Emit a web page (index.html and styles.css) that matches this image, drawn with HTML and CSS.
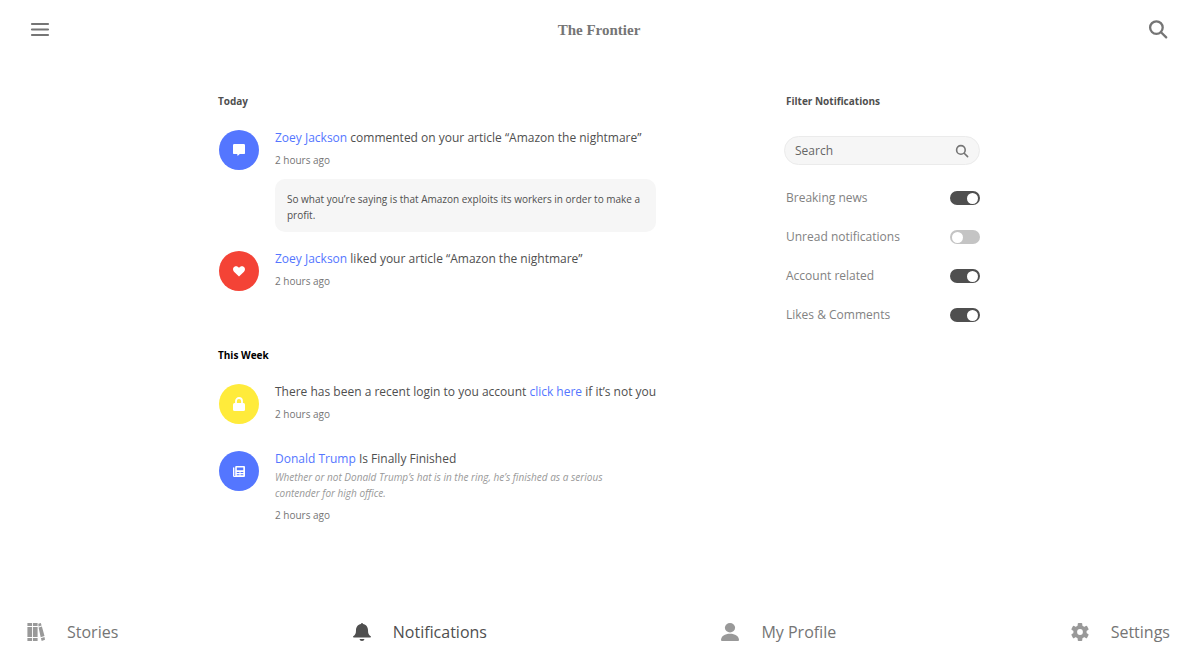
FILE: index.html
```html
<!DOCTYPE html>
<html lang="en">
<head>
<meta charset="utf-8">
<meta name="viewport" content="width=device-width, initial-scale=1">
<title>The Frontier</title>
<link rel="stylesheet" href="styles.css">
</head>
<body>
<header class="topbar">
  <button class="icon-button" type="button" aria-label="Menu">
    <svg width="20" height="20" viewBox="0 0 20 20" fill="none" stroke="#757575" stroke-width="2.2" stroke-linecap="round"><path d="M2 4h16M2 9.500h16M2 15h16"/></svg>
  </button>
  <h1 class="brand">The Frontier</h1>
  <button class="icon-button" type="button" aria-label="Search">
    <svg width="20" height="20" viewBox="0 0 20 20" fill="none" stroke="#757575" stroke-width="2.3" stroke-linecap="round"><circle cx="8.400" cy="7.600" r="6.300"/><path d="M13 12.200l5.200 5.200"/></svg>
  </button>
</header>

<main class="content">
  <div class="feed">
    <section>
      <h2 class="heading">Today</h2>
      <article class="notice">
        <span class="badge badge-blue"><svg width="12" height="12" viewBox="0 0 12 12" fill="#fff"><path d="M1.200 0h9.600Q12 0 12 1.200v7.700q0 1.200-1.200 1.200H6.800L4.600 12 4.200 10.100h-3Q0 10.100 0 8.900V1.200Q0 0 1.200 0z"/></svg></span>
        <div class="notice-body">
          <p class="message"><a href="#zoey">Zoey Jackson</a> commented on your article “Amazon the nightmare”</p>
          <p class="time">2 hours ago</p>
          <blockquote class="quote">So what you’re saying is that Amazon exploits its workers in order to make a profit.</blockquote>
        </div>
      </article>
      <article class="notice">
        <span class="badge badge-red"><svg width="12" height="12" viewBox="0 0 12 12" fill="#fff"><path d="M6 11.500L1 6.700C-.5 5-.2 2.700 1.400 1.700 2.900.8 4.900 1.200 6 2.800 7.100 1.200 9.100.8 10.600 1.700c1.600 1 1.900 3.300.4 5z"/></svg></span>
        <div class="notice-body">
          <p class="message"><a href="#zoey">Zoey Jackson</a> liked your article “Amazon the nightmare”</p>
          <p class="time">2 hours ago</p>
        </div>
      </article>
    </section>
    <section>
      <h2 class="heading heading-dark">This Week</h2>
      <article class="notice notice-spaced">
        <span class="badge badge-yellow"><svg width="12" height="14" viewBox="0 0 12 14"><rect y="6" width="12" height="8" rx="1.500" fill="#fff"/><path d="M3 6.500V4a3 3 0 0 1 6 0v2.500" fill="none" stroke="#fff" stroke-width="1.800"/></svg></span>
        <div class="notice-body">
          <p class="message">There has been a recent login to you account <a href="#login">click here</a> if it’s not you</p>
          <p class="time">2 hours ago</p>
        </div>
      </article>
      <article class="notice">
        <span class="badge badge-blue"><svg width="12" height="11" viewBox="0 0 12 11"><path fill="#fff" fill-rule="evenodd" d="M3.200 0H11q1 0 1 1v9q0 1-1 1H1.200Q0 11 0 9.800V2q0-.7.700-.7t.7.700v7.500q0 .5.400.5t.4-.5V1q0-1 1-1zM3.800 1.500v2.800h6.500V1.500zM3.800 5.900v1h2.700v-1zM7.500 5.900v1h2.800v-1zM3.800 8.200v1h2.700v-1zM7.500 8.200v1h2.800v-1z"/></svg></span>
        <div class="notice-body">
          <p class="message"><a href="#trump">Donald Trump</a> Is Finally Finished</p>
          <p class="excerpt">Whether or not Donald Trump’s hat is in the ring, he’s finished as a serious contender for high office.</p>
          <p class="time">2 hours ago</p>
        </div>
      </article>
    </section>
  </div>

  <aside class="filters">
    <h2 class="heading">Filter Notifications</h2>
    <div class="search">
      <input class="search-input" type="text" placeholder="Search" aria-label="Search notifications">
      <svg width="14" height="14" viewBox="0 0 14 14" fill="none" stroke="#757575" stroke-width="1.600" stroke-linecap="round"><circle cx="5.900" cy="5.900" r="4.300"/><path d="M9.200 9.200l3.400 3.400"/></svg>
    </div>
    <div class="toggles">
      <label class="toggle">Breaking news<input class="switch" type="checkbox" checked></label>
      <label class="toggle">Unread notifications<input class="switch" type="checkbox"></label>
      <label class="toggle">Account related<input class="switch" type="checkbox" checked></label>
      <label class="toggle">Likes &amp; Comments<input class="switch" type="checkbox" checked></label>
    </div>
  </aside>
</main>

<nav class="tabs">
  <a class="tab" href="#stories">
    <svg width="18" height="18" viewBox="0 0 18 18" fill="#999"><path d="M.4 0h4.700v3H.4zM.4 3.900h4.700v10.200H.4zM.4 15h4.700v3H.4zM6 0h4.600v3H6zM6 3.900h4.600v10.200H6zM6 15h4.600v3H6zM11.300.8l2.500-.8.8 2.500-3.100 1zM11.600 4.400l3.300-.9 2.600 9.500-3.800 1.200zM13.900 15.200l3.600-1.100.5 2.700L14.700 18z"/></svg>
    Stories</a>
  <a class="tab tab-active" href="#notifications" aria-current="page">
    <svg width="18" height="18" viewBox="0 0 18 18" fill="#4f4f4f"><path d="M8 1a1 1 0 0 1 2 0C13 1.500 15 4 15 7.200c0 3.600.8 4.700 2.700 6 .6.600.2 1.300-.5 1.300H.8c-.7 0-1.100-.7-.5-1.300C2.200 11.900 3 10.800 3 7.200 3 4 5 1.500 8 1zM6.500 15.900h5A2.500 2.500 0 0 1 9 18a2.500 2.500 0 0 1-2.500-2.100z"/></svg>
    Notifications</a>
  <a class="tab" href="#profile">
    <svg width="18" height="18" viewBox="0 0 18 18" fill="#999"><ellipse cx="9" cy="4.700" rx="5.100" ry="4.700"/><path d="M0 17c0-4 4-6.300 9-6.300S18 13 18 17q0 1-1 1H1q-1 0-1-1z"/></svg>
    My Profile</a>
  <a class="tab" href="#settings">
    <svg width="18" height="18" viewBox="0 0 18 18"><g fill="#999"><circle cx="9" cy="9" r="6.700"/><rect x="6.700" y="0" width="4.600" height="18" rx="1"/><rect x="6.700" y="0" width="4.600" height="18" rx="1" transform="rotate(60 9 9)"/><rect x="6.700" y="0" width="4.600" height="18" rx="1" transform="rotate(120 9 9)"/></g><circle cx="9" cy="9" r="2.900" fill="#fff"/></svg>
    Settings</a>
</nav>
</body>
</html>
```
FILE: styles.css
```css
* {
  box-sizing: border-box;
}

body {
  margin: 0;
  min-height: 100vh;
  display: flex;
  flex-direction: column;
  background: #fff;
  color: #4f4f4f;
  font-family: "Open Sans", "Noto Sans", sans-serif;
  font-size: 12px;
  line-height: 16px;
}

h1, h2, p, blockquote {
  margin: 0;
}

a {
  color: #5476ff;
  text-decoration: none;
}

svg {
  display: block;
  flex: none;
}

.topbar {
  display: flex;
  align-items: center;
  justify-content: space-between;
  padding: 20px 30px;
}

.icon-button {
  padding: 0;
  border: 0;
  background: none;
  cursor: pointer;
}

.brand {
  color: #757575;
  font-family: "Liberation Serif", serif;
  font-size: 15px;
  font-weight: 700;
  line-height: 20px;
}

.content {
  flex: 1;
  display: flex;
  justify-content: space-between;
  width: 100%;
  max-width: 762px;
  margin: 0 auto;
  padding-top: 33px;
}

.feed {
  display: flex;
  flex-direction: column;
  gap: 37px;
  width: 442px;
}

.heading {
  margin-bottom: 21px;
  font-size: 10px;
  font-weight: 700;
  line-height: 16px;
}

.heading-dark {
  color: #000;
}

.notice {
  display: flex;
  gap: 16px;
  margin-bottom: 19px;
  padding-left: 1px;
}

.notice-spaced {
  margin-bottom: 27px;
}

.badge {
  flex: none;
  display: flex;
  align-items: center;
  justify-content: center;
  width: 40px;
  height: 40px;
  border-radius: 50%;
}

.notice-body {
  flex: 1;
}

.badge-blue {
  background: #5476ff;
}

.badge-red {
  background: #f44336;
}

.badge-yellow {
  background: #ffeb3b;
}

.time {
  margin-top: 6px;
  color: #757575;
  font-size: 10px;
}

.quote {
  max-width: 381px;
  margin-top: 11px;
  padding: 12px 12px 9px;
  border-radius: 10px;
  background: #f6f6f6;
  font-size: 10px;
}

.excerpt {
  max-width: 360px;
  margin-top: 2px;
  color: #999;
  font-size: 10px;
  font-style: italic;
}

.filters {
  width: 196px;
}

.filters .heading {
  margin-bottom: 27px;
  padding-left: 2px;
}

.search {
  display: flex;
  align-items: center;
  height: 29px;
  padding: 0 10px;
  border: 1px solid #ebebeb;
  border-radius: 15px;
  background: #f6f6f6;
}

.search-input {
  flex: 1;
  min-width: 0;
  padding: 0;
  border: 0;
  outline: 0;
  background: none;
  color: #666;
  font: inherit;
}

.search-input::placeholder {
  color: #666;
  opacity: 1;
}

.toggles {
  display: flex;
  flex-direction: column;
  gap: 23px;
  margin-top: 25px;
}

.toggle {
  display: flex;
  align-items: center;
  justify-content: space-between;
  padding-left: 2px;
  color: #828282;
}

.switch {
  appearance: none;
  display: flex;
  align-items: center;
  width: 30px;
  height: 14px;
  margin: 0;
  padding: 0 2px;
  border-radius: 7px;
  background: #c4c4c4;
  cursor: pointer;
}

.switch::before {
  content: "";
  width: 11px;
  height: 11px;
  border-radius: 50%;
  background: #fff;
}

.switch:checked {
  justify-content: flex-end;
  background: #4f4f4f;
}

.tabs {
  display: flex;
  justify-content: space-between;
  padding: 0 28px 24px 27px;
}

.tab {
  display: flex;
  align-items: center;
  gap: 22px;
  color: #757575;
  font-size: 16px;
  line-height: 24px;
}

.tab-active {
  color: #4f4f4f;
}
```
